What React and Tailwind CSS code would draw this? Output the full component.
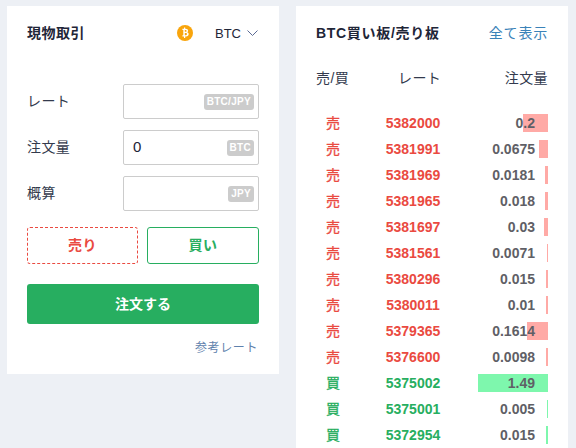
import React from 'react';

const ROWS = [
  { side: '売', rate: '5382000', qty: '0.2', bar: 25 },
  { side: '売', rate: '5381991', qty: '0.0675', bar: 9 },
  { side: '売', rate: '5381969', qty: '0.0181', bar: 3 },
  { side: '売', rate: '5381965', qty: '0.018', bar: 3 },
  { side: '売', rate: '5381697', qty: '0.03', bar: 4 },
  { side: '売', rate: '5381561', qty: '0.0071', bar: 1 },
  { side: '売', rate: '5380296', qty: '0.015', bar: 2 },
  { side: '売', rate: '5380011', qty: '0.01', bar: 2 },
  { side: '売', rate: '5379365', qty: '0.1614', bar: 21 },
  { side: '売', rate: '5376600', qty: '0.0098', bar: 2 },
  { side: '買', rate: '5375002', qty: '1.49', bar: 70 },
  { side: '買', rate: '5375001', qty: '0.005', bar: 1 },
  { side: '買', rate: '5372954', qty: '0.015', bar: 2 },
];

const FIELDS = [
  { label: 'レート', unit: 'BTC/JPY', value: '' },
  { label: '注文量', unit: 'BTC', value: '0' },
  { label: '概算', unit: 'JPY', value: '' },
];

const FONT = "font-['Liberation_Sans','Noto_Sans_CJK_JP',sans-serif]";

const BitcoinIcon = () => (
  <svg viewBox="0 0 16 16" className="ml-[1px] w-[16px] h-[16px]">
    <circle cx="8" cy="8" r="8" fill="#f9a50c" />
    <path
      d="M5.4 3.8h3.4c1.4 0 2.3.8 2.3 1.9 0 .7-.4 1.2-1 1.5 1 .2 1.6 1 1.6 1.9 0 1.4-1 2.3-2.6 2.3H5.4v-1.2h.9V5H5.400zM7.800 5v1.800h.8c.6 0 1-.3 1-.9s-.4-.9-1-.9zM7.800 8v2.200h1c.7 0 1.200-.4 1.200-1.100S9.500 8 8.800 8zM7 2.600h1.200v1.200H7zM7 11.400h1.200v1.600H7z"
      fill="#fff"
    />
  </svg>
);

const Chevron = () => (
  <svg viewBox="0 0 11 6" className="ml-[6px] w-[11px] h-[6px]" fill="none" stroke="#5b6a94" strokeWidth="1">
    <path d="M.5.5l5 5 5-5" />
  </svg>
);

const Field = ({ label, unit, value }) => (
  <div className="flex items-center h-[35px] mb-[11px]">
    <span className="w-[96px] text-[14px] tracking-[0.4px] text-[#333a4d]">{label}</span>
    <div className="flex-1 h-full flex items-center justify-between pl-[9px] pr-[4px] border border-[#cccccc] rounded-[2px]">
      <span className="text-[15px] text-[#1b2438]">{value}</span>
      <span className="h-[16px] px-[3px] flex items-center rounded-[3px] bg-[#cccccc] text-white text-[10px] font-bold tracking-[0.3px]">{unit}</span>
    </div>
  </div>
);

const OrderRow = ({ side, rate, qty, bar }) => {
  const isSell = side === '売';
  const color = isSell ? 'text-[#ea4a41]' : 'text-[#27ae60]';
  return (
    <div className="relative flex items-center h-[18px] mb-[8px] text-[14px]">
      <span className={`w-[34px] text-center [-webkit-text-stroke:0.3px_currentColor] ${color}`}>{side}</span>
      <span className={`w-[126px] text-center font-bold ${color}`}>{rate}</span>
      <div
        className={`absolute right-0 top-0 h-full ${isSell ? 'bg-[#ffaaa6]' : 'bg-[#7ef7ad]'}`}
        style={{ width: bar }}
      />
      <span className="relative flex-1 text-right pr-[13px] font-bold text-[#5f5f66]">{qty}</span>
    </div>
  );
};

export default function App() {
  return (
    <div className={`h-[448px] overflow-hidden bg-[#edf0f5] flex items-start gap-[17px] pl-[7px] pt-[6px] ${FONT}`}>
      <div className="w-[272px] h-[368px] bg-white px-[20px]">
        <div className="flex items-center h-[54px]">
          <h2 className="flex-1 text-[14px] font-bold tracking-[0.5px] text-[#1f2638]">現物取引</h2>
          <BitcoinIcon />
          <span className="ml-[22px] mt-[1px] text-[13px] text-[#1f2638]">BTC</span>
          <Chevron />
          <span className="w-[1px]" />
        </div>
        <div className="mt-[24px]">
          {FIELDS.map((field) => (
            <Field key={field.label} {...field} />
          ))}
        </div>
        <div className="flex gap-[9px] mt-[16px]">
          <button type="button" className="w-[111px] h-[37px] border border-dashed border-[#ea4a41] rounded-[3px] text-[14px] font-bold tracking-[0.5px] text-[#ea4a41]">売り</button>
          <button type="button" className="flex-1 h-[37px] border border-[#27ae60] rounded-[3px] text-[14px] font-bold tracking-[0.5px] text-[#27ae60]">買い</button>
        </div>
        <button type="button" className="w-full h-[40px] mt-[20px] bg-[#27ae60] rounded-[3px] text-[14px] font-bold text-white">注文する</button>
        <p className="mt-[15px] pr-[1px] text-right text-[12px] tracking-[0.6px] text-[#5f82ad]">参考レート</p>
      </div>

      <div className="w-[272px] h-[460px] bg-white px-[20px]">
        <div className="flex items-center justify-between h-[54px]">
          <h2 className="text-[14px] font-bold tracking-[0.7px] text-[#1f2638]">BTC買い板/売り板</h2>
          <a className="mt-[1px] text-[14px] tracking-[0.8px] text-[#3a82b8]">全て表示</a>
        </div>
        <div className="flex items-center h-[20px] mt-[8px] text-[14px] tracking-[0.4px] text-[#333a4d]">
          <span className="w-[82px]">売/買</span>
          <span className="w-[40px] text-center whitespace-nowrap">レート</span>
          <span className="flex-1 text-right">注文量</span>
        </div>
        <div className="mt-[26px]">
          {ROWS.map((row) => (
            <OrderRow key={row.rate} {...row} />
          ))}
        </div>
      </div>
    </div>
  );
}
